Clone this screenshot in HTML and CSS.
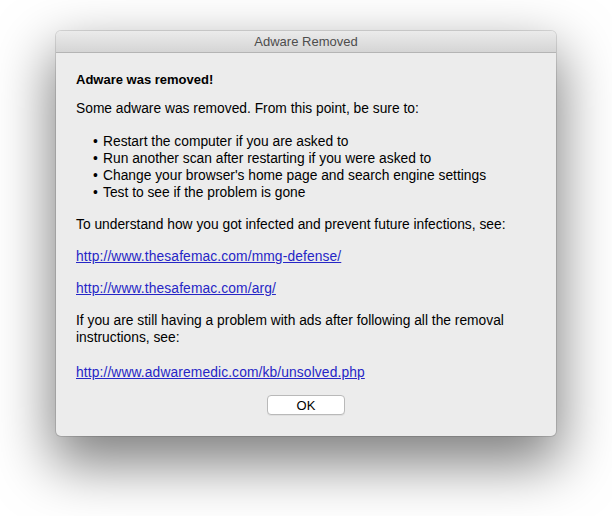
FILE: index.html
```html
<!DOCTYPE html>
<html>
<head>
<meta charset="utf-8">
<link rel="stylesheet" href="styles.css">
</head>
<body>
<div class="window">
  <div class="titlebar">Adware Removed</div>
  <div class="content">
    <p class="heading">Adware was removed!</p>
    <p class="intro">Some adware was removed. From this point, be sure to:</p>
    <ul class="steps">
      <li>Restart the computer if you are asked to</li>
      <li>Run another scan after restarting if you were asked to</li>
      <li>Change your browser's home page and search engine settings</li>
      <li>Test to see if the problem is gone</li>
    </ul>
    <p class="para">To understand how you got infected and prevent future infections, see:</p>
    <p class="para"><a href="#">http://www.thesafemac.com/mmg-defense/</a></p>
    <p class="para"><a href="#">http://www.thesafemac.com/arg/</a></p>
    <p class="para">If you are still having a problem with ads after following all the removal instructions, see:</p>
    <p class="para last"><a href="#">http://www.adwaremedic.com/kb/unsolved.php</a></p>
    <div class="actions"><button class="ok">OK</button></div>
  </div>
</div>
</body>
</html>
```
FILE: styles.css
```css
html, body {
  margin: 0;
  padding: 0;
  background: #ffffff;
}
body {
  font-family: "Liberation Sans", Arial, sans-serif;
  font-size: 13.8px;
  color: #000;
  height: 516px;
  box-sizing: border-box;
  padding: 31px 0 0 56px;
  overflow: hidden;
}
.window {
  width: 500px;
  height: 405px;
  box-sizing: border-box;
  background: #ececec;
  border-radius: 5px;
  box-shadow: 0 0 0 1px rgba(0,0,0,0.12), 0 24px 55px 4px rgba(0,0,0,0.5);
  display: flex;
  flex-direction: column;
  overflow: hidden;
}
.titlebar {
  height: 22px;
  box-sizing: border-box;
  background: linear-gradient(#ebebeb, #d5d5d5);
  border-bottom: 1px solid #b4b4b4;
  text-align: center;
  line-height: 22px;
  color: #4d4d4d;
  font-size: 13px;
}
.content {
  padding: 18px 20px 0 20px;
  display: flex;
  flex-direction: column;
  line-height: 17px;
}
.content p {
  margin: 0;
}
.heading {
  font-weight: bold;
  font-size: 13px;
}
.intro {
  margin-top: 12px !important;
}
.steps {
  margin: 16px 0 0 0;
  padding: 0 0 0 17px;
  list-style: none;
}
.steps li::before {
  content: "\2022";
  display: inline-block;
  width: 10px;
}
.para {
  margin-top: 15px !important;
}
a {
  color: #2626c6;
  text-decoration: underline;
  letter-spacing: 0.12px;
}
.last {
  margin-top: 18px !important;
}
.actions {
  display: flex;
  justify-content: center;
  margin-top: 14px;
}
.ok {
  width: 78px;
  height: 20px;
  padding: 0;
  background: #ffffff;
  border: 1px solid #b9b9b9;
  border-radius: 4px;
  font-family: "Liberation Sans", Arial, sans-serif;
  font-size: 13px;
  color: #000;
  box-shadow: 0 1px 0 rgba(0,0,0,0.05);
}
```
